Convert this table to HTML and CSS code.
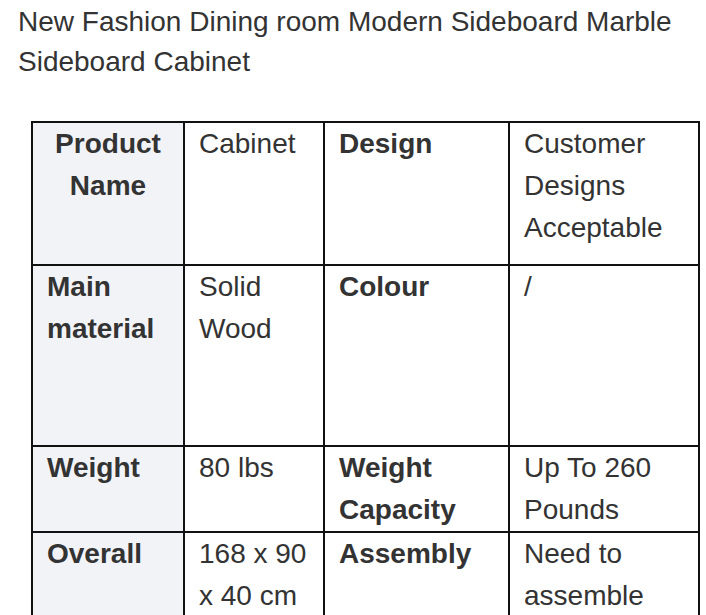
FILE: index.html
```html
<!DOCTYPE html>
<html>
<head>
<meta charset="utf-8">
<link rel="stylesheet" href="styles.css">
</head>
<body>
<div class="page">
  <h1 class="title">New Fashion Dining room Modern Sideboard Marble Sideboard Cabinet</h1>
  <table class="spec">
    <colgroup>
      <col class="c1"><col class="c2"><col class="c3"><col class="c4">
    </colgroup>
    <tr class="r1">
      <th class="label center">Product Name</th>
      <td>Cabinet</td>
      <td class="key">Design</td>
      <td>Customer Designs Acceptable</td>
    </tr>
    <tr class="r2">
      <th class="label">Main material</th>
      <td>Solid Wood</td>
      <td class="key">Colour</td>
      <td>/</td>
    </tr>
    <tr class="r3">
      <th class="label">Weight</th>
      <td>80 lbs</td>
      <td class="key">Weight Capacity</td>
      <td>Up To 260 Pounds</td>
    </tr>
    <tr class="r4">
      <th class="label">Overall</th>
      <td>168 x 90 x 40 cm</td>
      <td class="key">Assembly</td>
      <td>Need to assemble</td>
    </tr>
  </table>
</div>
</body>
</html>
```
FILE: styles.css
```css
html, body {
  margin: 0;
  padding: 0;
  background: #fff;
}
.page {
  padding: 2px 0 0 18px;
  font-family: "Liberation Sans", Arial, sans-serif;
  color: #333;
}
.title {
  margin: 0;
  font-size: 28px;
  font-weight: normal;
  line-height: 40px;
  color: #333;
}
.spec {
  margin: 39px 0 0 13px;
  border-collapse: collapse;
  table-layout: fixed;
  width: 667px;
  font-size: 28px;
  line-height: 42px;
}
.c1 { width: 152px; }
.c2 { width: 140px; }
.c3 { width: 185px; }
.c4 { width: 190px; }
.spec th, .spec td {
  border: 2px solid #111;
  padding: 0 14px;
  vertical-align: top;
  text-align: left;
  color: #333;
}
.spec th {
  background: #f2f3f7;
  font-weight: bold;
}
.spec .center { text-align: center; }
.spec .key { font-weight: bold; }
.r1 { height: 143px; }
.r2 { height: 181px; }
.r3 { height: 82px; }
.r4 { height: 100px; }
```
